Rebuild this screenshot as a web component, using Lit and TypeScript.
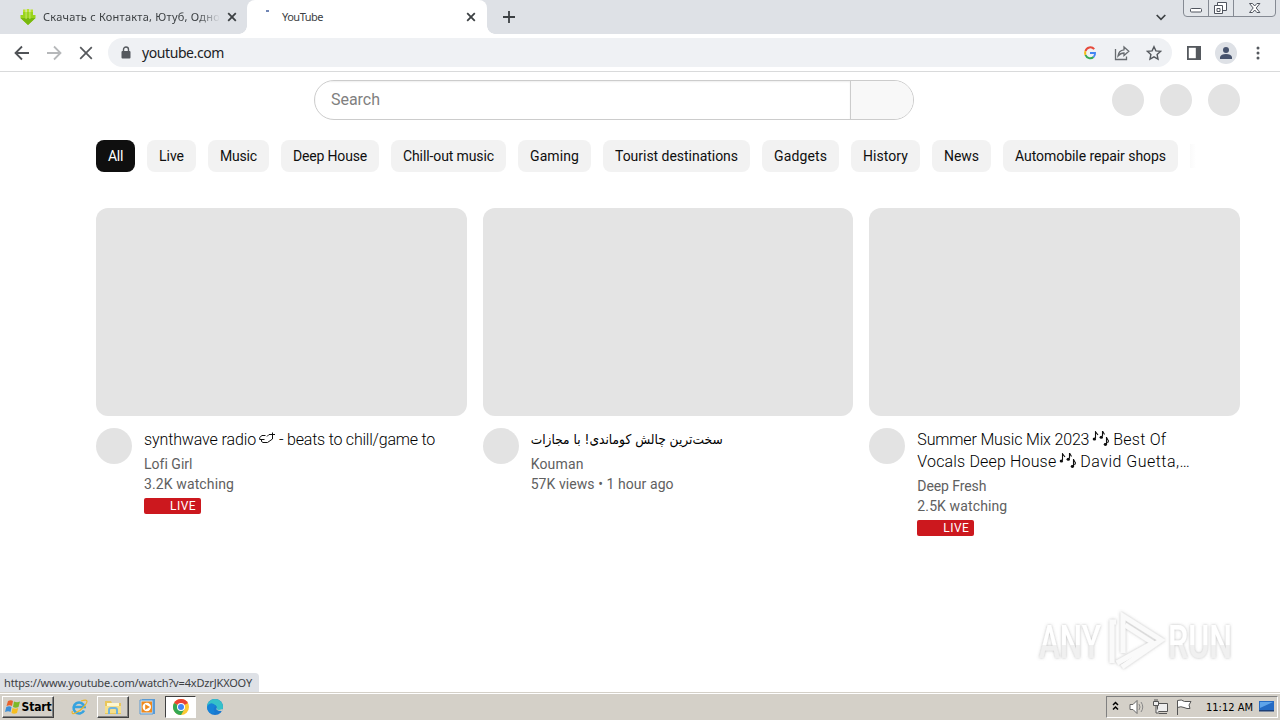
import { LitElement, html, css } from "lit";
import { customElement, property } from "lit/decorators.js";

/** Single line of text tracked so that it fills a given advance width. */
@customElement("fit-text")
class FitText extends LitElement {
  @property() text = "";
  @property({ type: Number }) w = 0;
  static styles = css`
    :host { display: inline-block; white-space: pre; }
  `;
  render() {
    return html`<span>${this.text}</span>`;
  }
  firstUpdated() {
    const span = this.renderRoot.querySelector("span")!;
    const natural = span.getBoundingClientRect().width;
    const n = Array.from(this.text).length;
    this.style.letterSpacing = `${(this.w - natural) / n}px`;
    this.style.width = `${this.w}px`;
  }
}

const fit = (text: string, w: number) => html`<fit-text .text=${text} .w=${w}></fit-text>`;

const chips: [string, number][] = [
  ["All", 15], ["Live", 25], ["Music", 37], ["Deep House", 74], ["Chill-out music", 91],
  ["Gaming", 49], ["Tourist destinations", 123], ["Gadgets", 53], ["History", 45],
  ["News", 35], ["Automobile repair shops", 151],
];

const notes = html`<svg class="glyph" width="17" height="18" viewBox="0 0 17 18">
  <g fill="none" stroke="#0f0f0f" stroke-width="1.1"><path d="M3.500 7V.8L6 4M10.500 5.500V0L12.500 3.500M14.500 13V6"/><path d="M14.500 6.500l2 3.500-1 2"/></g>
  <g fill="#0f0f0f"><ellipse cx="2.400" cy="8" rx="1.700" ry="1.500"/><ellipse cx="9.300" cy="6.300" rx="1.700" ry="1.500"/><ellipse cx="13.400" cy="13.500" rx="1.700" ry="1.400"/></g></svg>`;

const planet = html`<svg class="glyph" width="16" height="18" viewBox="0 0 16 18">
  <path d="M6.500 4.500H3L.7 6.500V8.500H5.500M2.500 8.500V10.500L4 11.500H8.500L13.500 8V1.500M8 5.500L10 3.500H16" fill="none" stroke="#0f0f0f" stroke-width="1"/></svg>`;

const tabX = html`<svg width="10" height="10" viewBox="0 0 10 10"><path d="M1.200 1.200l7.600 7.600M8.800 1.200L1.200 8.800" stroke="#3c4043" stroke-width="1.800"/></svg>`;

const videos = [
  {
    title: html`<div class="line">${fit("synthwave radio", 112)}<span class="s3">${planet}</span>${fit("- beats to chill/game to", 156)}</div>`,
    channel: fit("Lofi Girl", 48),
    meta: fit("3.2K watching", 90),
    live: true,
  },
  {
    title: html`<div class="line fa"><span dir="rtl">سخت‌ترین چالش کوماندی! با مجازات</span></div>`,
    channel: fit("Kouman", 53),
    meta: fit("57K views • 1 hour ago", 143),
    live: false,
  },
  {
    title: html`<div class="line">${fit("Summer Music Mix 2023", 172)}<span class="s3">${notes}</span>${fit("Best Of", 53)}</div>
      <div class="line">${fit("Vocals Deep House", 139)}<span class="s3">${notes}</span>${fit("David Guetta,…", 110)}</div>`,
    channel: fit("Deep Fresh", 69),
    meta: fit("2.5K watching", 90),
    live: true,
  },
];

@customElement("app-root")
class AppRoot extends LitElement {
  static styles = css`
    :host {
      display: flex; flex-direction: column; position: relative; width: 1280px; height: 720px;
      overflow: hidden; background: #fff; color: #0f0f0f; font-family: Roboto, sans-serif;
    }
    * { box-sizing: border-box; }
    svg { display: block; flex: none; }
    .strip { height: 34px; display: flex; background: #dee1e6; font: 11px "Noto Sans", sans-serif; color: #3c4043; }
    .tab { display: flex; align-items: center; height: 34px; }
    .tab > .name { position: relative; top: -1px; }
    .tab.idle { width: 247px; padding: 0 10px 0 20px; }
    .tab.idle .name { margin-left: 7px; width: 177px; flex: none; overflow: hidden; -webkit-mask-image: linear-gradient(90deg, #000 155px, transparent 177px); }
    .tab.idle svg:last-child { margin-left: 7px; }
    .tab.active { width: 240px; background: #fff; border-radius: 8px 8px 0 0; padding: 0 11px 0 19px; position: relative; }
    .tab.active::before, .tab.active::after { content: ""; position: absolute; bottom: 0; width: 8px; height: 8px; }
    .tab.active::before { left: -8px; background: radial-gradient(circle at 0 0, transparent 7.500px, #fff 8px); }
    .tab.active::after { right: -8px; background: radial-gradient(circle at 100% 0, transparent 7.500px, #fff 8px); }
    .spin { width: 3px; height: 2px; background: #7186b5; margin: -13px 13px 0 0; }
    .tab.active .name { flex: 1; }
    .plus { margin: 11px 0 0 16px; }
    .caret { margin: 14px 17px 0 auto; }
    .bar { height: 38px; display: flex; align-items: center; border-bottom: 1px solid #d9dadb; background: #fff; padding: 0 13px 0 14px; }
    .nav { display: flex; gap: 16px; }
    .omni { width: 1064px; height: 29px; margin-left: 14px; border-radius: 15px; background: #eff1f4; display: flex; align-items: center; padding: 0 10px 0 12px; font: 14px "Noto Sans", sans-serif; color: #202124; }
    .omni .url { margin-left: 10px; flex: 1; }
    .omni .acts { display: flex; gap: 16px; align-items: center; }
    .right { display: flex; align-items: center; margin-left: 14px; }
    .person { margin: 0 19px 0 13px; }
    .page { flex: 1; min-height: 0; display: flex; flex-direction: column; }
    .head { height: 56px; display: flex; align-items: center; padding: 0 40px 0 314px; }
    .search { width: 600px; height: 40px; display: flex; border: 1px solid #ccc; border-radius: 20px; overflow: hidden; }
    .field { flex: 1; padding: 0 0 0 16px; line-height: 37px; font-size: 16px; color: #808080; box-shadow: inset 0 1px 2px #eee; }
    .btn { width: 63px; background: #f8f8f8; border-left: 1px solid #ccc; }
    .dots { display: flex; gap: 16px; margin-left: auto; }
    .dot { width: 32px; height: 32px; border-radius: 50%; background: #e3e3e3; }
    .chips { display: flex; gap: 12px; height: 56px; padding: 12px 0 12px 96px; font-size: 14px; }
    .chip { height: 32px; line-height: 32px; padding: 0 12px; border-radius: 8px; background: #f2f2f2; white-space: nowrap; }
    .chip.on { background: #0f0f0f; color: #fff; }
    .rest { width: 6px; height: 24px; margin-top: 4px; background: linear-gradient(90deg, #fafafa, #fff); }
    .grid { display: grid; grid-template-columns: repeat(3, 1fr); gap: 16px; padding: 24px 40px 0 96px; }
    .thumb { height: 208px; border-radius: 12px; background: #e4e4e4; }
    .info { display: flex; gap: 12px; padding-top: 12px; }
    .ava { width: 36px; height: 36px; border-radius: 50%; background: #e3e3e3; flex: none; }
    .line { display: flex; height: 22px; line-height: 24px; font-size: 16px; font-weight: 300; color: #000; white-space: nowrap; }
    .fa { font-family: "DejaVu Sans Condensed", "DejaVu Sans", sans-serif; font-stretch: condensed; font-size: 13.600px; font-weight: 400; line-height: 23px; }
    .s3 { padding: 3px 4px 0 3px; }
    .sub { color: #606060; font-size: 14px; line-height: 20px; }
    .sub div { height: 20px; }
    .sub.pad { padding-top: 4px; }
    .live { width: 56.500px; height: 16px; margin-top: 4px; border-radius: 2px; background: #cc181e; color: #fff; font-size: 12px; line-height: 16px; padding-left: 26px; }
    .task { height: 28px; background: #d4d0c8; border-top: 1px solid #d4d0c8; box-shadow: inset 0 1px #fff; display: flex; align-items: center; padding: 3px 2px 2px 2px; font: 11px "DejaVu Sans Condensed", "DejaVu Sans", sans-serif; font-stretch: condensed; color: #000; }
    .raised { height: 22px; display: flex; align-items: center; justify-content: center; border: 1px solid; border-color: #fff #404040 #404040 #fff; box-shadow: inset -1px -1px #808080; }
    .start { width: 52px; font-weight: bold; font-size: 12px; gap: 1px; }
    .folder { width: 32px; margin-left: 9px; }
    .run { width: 31px; height: 22px; display: flex; align-items: center; justify-content: center; background: #fff; border: 1px solid; border-color: #404040 #fff #fff #404040; margin-left: 9px; }
    .tray { margin-left: auto; width: 172px; height: 22px; border: 1px solid; border-color: #808080 #fff #fff #808080; display: flex; align-items: center; padding-left: 5px; }
    .time { margin-left: 14px; }
    .status { position: absolute; left: 0; top: 673px; width: 259px; height: 19px; padding-left: 4px; background: #dee1e6; border-radius: 0 4px 0 0; font: 11px/20px "Noto Sans", sans-serif; color: #3c4043; }
    .mark { position: absolute; left: 1030px; top: 602px; overflow: visible; }
    .wm { font: 500 46px Roboto, sans-serif; }
  `;

  render() {
    return html`
      <div class="strip">
        <div class="tab idle">
          <svg width="16" height="16" viewBox="0 0 16 16"><path d="M3 .5h2.600v5H3zM6.700 0h2.600v5H6.700zM10.400.5H13v5h-2.600z" fill="#b9e02f"/><path d="M3 3h10v3h2.500v3L8 16 .5 9V6H3z" fill="#9ad41c"/><path d="M.5 9h15L8 16z" fill="#78b80e"/><path d="M6.100 1v9M9.900 1v9" stroke="#d6ee88" stroke-width=".8"/></svg>
          <div class="name">${fit("Скачать с Контакта, Ютуб, Одно", 177)}</div>${tabX}
        </div>
        <div class="tab active"><i class="spin"></i><div class="name">${fit("YouTube", 41)}</div>${tabX}</div>
        <svg class="plus" width="12" height="12" viewBox="0 0 12 12"><path d="M6 0v12M0 6h12" stroke="#3c4043" stroke-width="1.800"/></svg>
        <svg class="caret" width="10" height="7" viewBox="0 0 10 7"><path d="M.7 1L5 5.300 9.300 1" fill="none" stroke="#3c4043" stroke-width="1.700"/></svg>
        <svg width="97" height="18" viewBox="0 0 97 18">
          <path d="M.5 0v13q0 3.500 3.500 3.500h85q3.500 0 3.500-3.500V0M25.500 0v16M50.500 0v16" fill="#e3e6ea" stroke="#858a93"/>
          <g fill="#fff" stroke="#50555f"><rect x="7.500" y="8.500" width="11" height="3.500" rx="1"/><path d="M34.500 2.500h9v8h-9z"/><path d="M31.500 5.500h8v8h-8z"/><path d="M34 8.500h3v3h-3z"/>
          <path d="M66.500 3.500h3l2.200 2.500 2.200-2.500h3l-3.700 4.500 3.700 4.500h-3l-2.200-2.500-2.200 2.500h-3l3.700-4.500z"/></g>
        </svg>
      </div>

      <div class="bar">
        <div class="nav">
          <svg width="16" height="16" viewBox="0 0 16 16"><path d="M15 8H2M8 1.500L1.500 8 8 14.500" fill="none" stroke="#505357" stroke-width="1.800"/></svg>
          <svg width="16" height="16" viewBox="0 0 16 16"><path d="M1 8h13M8 1.500L14.500 8 8 14.500" fill="none" stroke="#b6b8ba" stroke-width="1.800"/></svg>
          <svg width="16" height="16" viewBox="0 0 16 16"><path d="M2.200 2.200l11.600 11.600M13.800 2.200L2.200 13.800" stroke="#55585c" stroke-width="1.700"/></svg>
        </div>
        <div class="omni">
          <svg width="12" height="14" viewBox="0 0 12 14"><rect x="1.500" y="5" width="9" height="7.500" rx="1" fill="#55595e"/><path d="M3.500 5.500V3.500a2.500 2.500 0 015 0v2" fill="none" stroke="#55595e" stroke-width="1.400"/></svg>
          <div class="url">${fit("youtube.com", 82)}</div>
          <div class="acts">
            <svg width="16" height="16" viewBox="0 0 16 16" fill="none" stroke-width="2"><path d="M12.200 4.200A5 5 0 003.500 6" stroke="#e64a3b"/><path d="M3.500 6a5 5 0 000 4" stroke="#f5bb18"/><path d="M3.500 10a5 5 0 008 2" stroke="#35a853"/><path d="M8 8h5q.3 2.300-1.500 4" stroke="#4285f4"/></svg>
            <svg width="16" height="16" viewBox="0 0 16 16" fill="none" stroke="#686c70" stroke-width="1.300"><path d="M1.500 4v10.500h11v-3"/><path d="M4 11Q4.500 5.500 10 4.800V2L14.800 6.300 10 10.500V8Q6.500 8 4 11z"/></svg>
            <svg width="16" height="16" viewBox="0 0 16 16"><path d="M8 1.700l1.900 4.200 4.600.5-3.400 3.100.9 4.600L8 11.800l-4 2.300.9-4.600L1.500 6.400l4.600-.5z" fill="none" stroke="#55595e" stroke-width="1.400"/></svg>
          </div>
        </div>
        <div class="right">
          <svg width="16" height="16" viewBox="0 0 16 16"><path d="M1 1h14v14H1z" fill="#55595e"/><path d="M2.800 2.800h7v10.400h-7z" fill="#fff"/></svg>
          <svg class="person" width="22" height="22" viewBox="0 0 22 22"><circle cx="11" cy="11" r="11" fill="#dee1e6"/><circle cx="11" cy="8" r="3" fill="#47536d"/><path d="M5 17v-2q1-3 6-3t6 3v2z" fill="#47536d"/></svg>
          <svg width="4" height="14" viewBox="0 0 4 14" fill="#55595e"><circle cx="2" cy="2" r="1.500"/><circle cx="2" cy="7" r="1.500"/><circle cx="2" cy="12" r="1.500"/></svg>
        </div>
      </div>

      <div class="page">
        <div class="head">
          <div class="search"><div class="field">${fit("Search", 49)}</div><div class="btn"></div></div>
          <div class="dots"><div class="dot"></div><div class="dot"></div><div class="dot"></div></div>
        </div>
        <div class="chips">
          ${chips.map(([t, w], i) => html`<div class="chip ${i === 0 ? "on" : ""}">${fit(t, w)}</div>`)}
          <div class="rest"></div>
        </div>
        <div class="grid">
          ${videos.map((v) => html`<div>
            <div class="thumb"></div>
            <div class="info"><div class="ava"></div>
              <div>${v.title}<div class="sub pad"><div>${v.channel}</div><div>${v.meta}</div></div>${v.live ? html`<div class="live">${fit("LIVE", 26)}</div>` : ""}</div>
            </div></div>`)}
        </div>
      </div>

      <div class="task">
        <div class="raised start">
          <svg width="16" height="16" viewBox="0 0 16 16"><path d="M3 2q3-1.500 5 0L7 7q-2-1.500-5.500 0z" fill="#e8622c"/><path d="M9 2.500q3 1.500 6 0L13.500 8q-3 1.500-5.500 0z" fill="#7db928"/><path d="M1.300 8q3-1.500 5.200 0l-1 5q-2-1.500-5.500 0z" fill="#3b8fd8"/><path d="M7.500 9q3 1.500 5.700 0L12 14q-3 1.300-5.500 0z" fill="#f6be20"/></svg>
          ${fit("Start", 30)}
        </div>
        <svg width="34" height="18" viewBox="-17 0 34 18"><path d="M13 12.500a5.500 5.500 0 11.500-3.500H3.500" fill="none" stroke="#36a3df" stroke-width="2.600"/><path d="M1.500 13C-1 18.500 8 14.500 13 8.500s3.500-7.500-3-5.500" fill="none" stroke="#eab62d" stroke-width="1.200"/></svg>
        <div class="raised folder"><svg width="18" height="16" viewBox="0 0 18 16"><path d="M1 2h6l1 2h9v11H1z" fill="#e9c65a"/><path d="M3 4h12v5H3z" fill="#fdf6d0"/><path d="M1 7h16v7H1z" fill="#f5df8b"/><path d="M5 15v-4q0-2 2-2h4q2 0 2 2v4" fill="none" stroke="#6fb3de" stroke-width="2"/></svg></div>
        <svg width="27" height="16" viewBox="-10 0 27 16"><path d="M3 0h13v15H3z" fill="#5a9bd4"/><path d="M1 1h13v14H1z" fill="#cfe4f5" stroke="#5a9bd4"/><path d="M2.500 2.500h10.500v11H2.500z" fill="#f08a1c"/><circle cx="7.800" cy="8" r="4.200" fill="#fff"/><path d="M6.200 5.200L11 8l-4.800 2.800z" fill="#f08a1c"/></svg>
        <div class="run"><svg width="16" height="16" viewBox="0 0 16 16"><circle cx="8" cy="8" r="8" fill="#fcc934"/><path d="M8 8L1.070 4A8 8 0 0114.930 4z" fill="#ea4335"/><path d="M8 8L1.070 4A8 8 0 008 16l3.500-6z" fill="#34a853"/><circle cx="8" cy="8" r="4" fill="#fff"/><circle cx="8" cy="8" r="3" fill="#4285f4"/></svg></div>
        <svg width="28" height="16" viewBox="-11 0 28 16"><circle cx="8" cy="8" r="8" fill="#1978cf"/><path d="M0 8a8 8 0 0116 0q0 4-4.500 3.500Q9 11 10 8 8 3 0 8z" fill="#35c1c9"/><path d="M9 8q-1 4 6 4l1-2-4 1q-3 0-3-3z" fill="#d4d0c8"/><path d="M1 6q4-4 8 1-4 2-1 7Q1 16 0 8z" fill="#1683d8"/></svg>
        <div class="tray">
          <svg width="8" height="12" viewBox="0 0 8 12"><path d="M1 4l2.500-2.500L6 4M1 8.500L3.500 6 6 8.500" fill="none" stroke="#000" stroke-width="1.500"/></svg>
          <svg width="24" height="16" viewBox="-9 0 24 16" fill="#fff" stroke="#666"><path d="M1 5.500h3l4-4v13l-4-4H1z"/><path d="M10 5q2 3 0 6M12 3q3.500 5 0 10" fill="none" stroke="#888"/></svg>
          <svg width="24" height="16" viewBox="-9 0 24 16" fill="#eee" stroke="#555"><path d="M4.500 4.500h10v8h-10zM6 14.500h8"/><path d="M.5 2.500h5v4h-5zM2 0v2M4 0v2M3 7v7h3"/></svg>
          <svg width="24" height="16" viewBox="-8 0 24 16"><path d="M1.500 16V1.500q4-1.500 7 1h6.500l-2 3.500 1 3.500q-3 .5-6-1-3-1.500-6.500 0" fill="#fff" stroke="#555"/></svg>
          <span class="time">${fit("11:12 AM", 47)}</span>
          <svg width="22" height="16" viewBox="-6 0 22 16"><path d="M0 2h15v9H0z" fill="#246bc4"/><path d="M1 3h13L1 9z" fill="#5ea4ea"/><path d="M0 11h15v1.500H0z" fill="#1c3f77"/></svg>
        </div>
      </div>

      <div class="status">${fit("https://www.youtube.com/watch?v=4xDzrJKXOOY", 248)}</div>

      <svg class="mark" width="230" height="76" viewBox="0 0 230 76">
        <defs><filter id="sh" x="-10%" y="-10%" width="120%" height="120%"><feDropShadow dx="0" dy="0" stdDeviation="1.800" flood-color="#777" flood-opacity=".5"/></filter>
        <linearGradient id="g" x1="0" y1="0" x2="0" y2="1"><stop offset=".55" stop-color="#fff"/><stop offset=".55" stop-color="#f0f0f0"/></linearGradient></defs>
        <g filter="url(#sh)">
          <g class="wm" fill="url(#g)"><text x="9" y="56" textLength="62" lengthAdjust="spacingAndGlyphs">ANY</text><text x="138" y="56" textLength="64" lengthAdjust="spacingAndGlyphs">RUN</text></g>
          <g fill="none" stroke="#fafafa" stroke-width="5"><path d="M93 51V14L131 38 92 65"/><path d="M95 23L123 41 87 61"/><path d="M82 61V20h4"/></g>
        </g>
      </svg>
    `;
  }
}
